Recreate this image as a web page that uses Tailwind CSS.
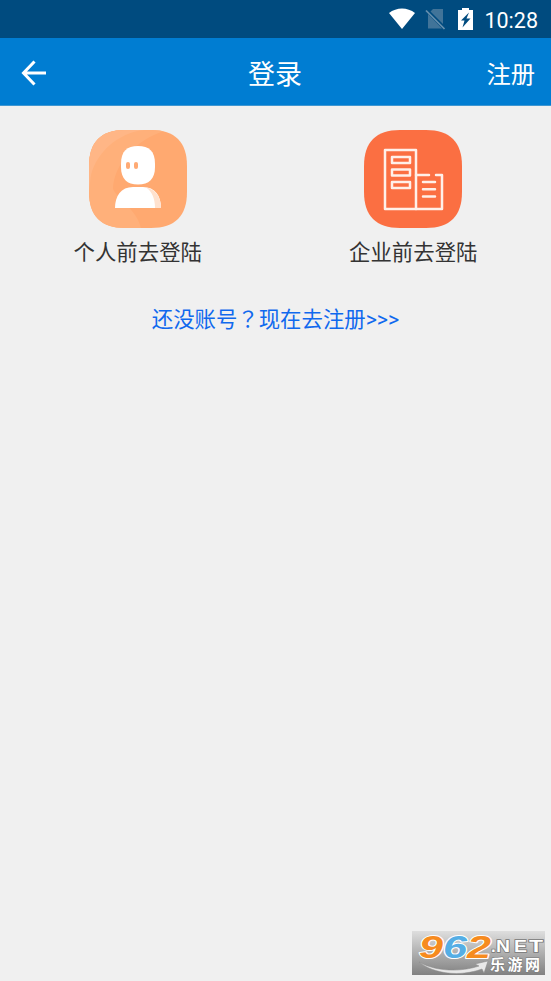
<!DOCTYPE html>
<html lang="zh-CN">
<head>
  <meta charset="UTF-8">
  <meta name="viewport" content="width=device-width, initial-scale=1.0">
  <title>登录</title>
  <script src="https://cdn.jsdelivr.net/npm/@tailwindcss/browser@4"></script>
</head>
<body class="relative flex flex-col h-[981px] overflow-hidden bg-[#f0f0f0] font-['Noto_Sans_CJK_SC',sans-serif]">
  <!-- Status bar -->
  <div class="flex items-center justify-end h-[38px] shrink-0 bg-[#004b7f] pr-[13px] text-white">
    <svg class="w-[28px] h-[22px] mr-[9px]" viewBox="0 0 28 22" fill="#fff">
      <path d="M1 5C8.500 -1 19.500 -1 27 5L14 21Z"/>
    </svg>
    <svg class="w-[21px] h-[22px] mr-[12px]" viewBox="0 0 21 22">
      <path d="M8 1H18V16L5.500 3.500ZM3 6L17 20.500H3Z" fill="#417499"/>
      <path d="M1 2.500L19.500 21" stroke="#6690ae" stroke-width="1.700"/>
    </svg>
    <svg class="w-[15px] h-[22px] mr-[11px]" viewBox="0 0 15 22">
      <path d="M4 0H11V2H15V22H0V2H4Z" fill="#fff"/>
      <path d="M11 4.500L3 12.500H6.500L4.500 19.500L12.500 10.500H8.500Z" fill="#004b7f"/>
    </svg>
    <span class="font-[Roboto,sans-serif] text-[21.500px] leading-6 pt-[3px]">10:28</span>
  </div>

  <!-- Header -->
  <header class="grid grid-cols-[1fr_auto_1fr] items-center h-[68px] shrink-0 bg-[#007dd2] border-b border-[#3f97d2] pl-[21px] pr-4 pt-[3px] text-white">
    <svg class="w-[26px] h-[26px]" viewBox="0 0 26 26" fill="none" stroke="#fff" stroke-width="3">
      <path d="M13.500 1.500L2.500 13L13.500 24.500M2.500 13H25"/>
    </svg>
    <h1 class="-ml-1.5 text-[27px] leading-10">登录</h1>
    <a href="#" class="justify-self-end text-[24.300px] leading-10">注册</a>
  </header>

  <!-- Login options -->
  <main>
    <div class="grid grid-cols-2 pt-6">
      <a href="#" class="flex flex-col items-center">
        <svg class="w-[98px] h-[98px]" viewBox="0 0 98 98">
          <defs>
            <clipPath id="tile">
              <path d="M36 0H62C86 0 98 12 98 36V62C98 86 86 98 62 98H36C12 98 0 86 0 62V36C0 12 12 0 36 0Z"/>
            </clipPath>
          </defs>
          <g clip-path="url(#tile)">
            <path d="M0 0H98V98H0Z" fill="#ffa970"/>
            <path d="M0 0H78C45 10 25 35 24 59C31 72 48 80 52 98H0Z" fill="#ffb07a"/>
            <path d="M0 0H55C29 3 8 22 2 45L0 60Z" fill="#ffb686"/>
          </g>
          <path d="M32 34C32 21 38 16 49 16C60 16 66 21 66 34V37C66 49 60 54.500 49 54.500C38 54.500 32 49 32 37Z" fill="#fff"/>
          <path d="M26 78C26 66 32 57 44 57H54C66 57 72 66 72 78Z" fill="#fff"/>
          <path d="M57 57.500C67 59 72 68 72 78H66C66 69 63 61 57 57.500Z" fill="#ffe2cf"/>
          <rect x="37" y="32" width="4" height="7" rx="2" fill="#ffaa74"/>
          <rect x="45" y="32" width="4" height="7" rx="2" fill="#ffaa74"/>
        </svg>
        <span class="mt-[6.500px] text-[21.400px] leading-8 text-[#333]">个人前去登陆</span>
      </a>
      <a href="#" class="flex flex-col items-center">
        <svg class="w-[98px] h-[98px]" viewBox="0 0 98 98">
          <path d="M36 0H62C86 0 98 12 98 36V62C98 86 86 98 62 98H36C12 98 0 86 0 62V36C0 12 12 0 36 0Z" fill="#fb6f42"/>
          <g fill="none" stroke="#fff0e9" stroke-width="2.500" stroke-linejoin="round">
            <path d="M21 20H52V79H21Z"/>
            <path d="M28 27H46V33H28ZM28 39.500H46V45.500H28ZM28 52H46V58H28Z"/>
            <path d="M52 45H65M72 45H78V79H52M59 52H71M59 59.300H71M59 66.500H71" stroke-linecap="round"/>
          </g>
        </svg>
        <span class="mt-[6.500px] text-[21.400px] leading-8 text-[#333]">企业前去登陆</span>
      </a>
    </div>
    <a href="#" class="block mt-[35.500px] text-center text-[21.400px] leading-8 text-[#1069ee]">还没账号<span lang="zh-TW" class="font-['Noto_Sans_CJK_TC',sans-serif]">？</span>现在去注册<span class="font-[Roboto,sans-serif]">&gt;&gt;&gt;</span></a>
  </main>

  <!-- Watermark over the page corner -->
  <div class="absolute left-[412px] top-[931px] w-[133px] h-[44px]">
    <svg class="w-full h-full overflow-visible" viewBox="0 0 133 44">
      <defs>
        <linearGradient id="mark" x1="0" y1="0" x2="0" y2="1">
          <stop offset="0" stop-color="#dedede"/>
          <stop offset="1" stop-color="#818181"/>
        </linearGradient>
      </defs>
      <rect width="133" height="44" fill="url(#mark)"/>
      <g font-family="Liberation Sans, sans-serif" font-weight="bold" font-style="italic" font-size="32" stroke="#fff" stroke-width="2" paint-order="stroke" stroke-linejoin="round">
        <text x="7" y="27" fill="#f68b1f" textLength="24" lengthAdjust="spacingAndGlyphs">9</text>
        <text x="31" y="27" fill="#55aee5" textLength="24" lengthAdjust="spacingAndGlyphs">6</text>
        <text x="55" y="27" fill="#f68b1f" textLength="24" lengthAdjust="spacingAndGlyphs">2</text>
      </g>
      <path d="M7 31C25 41 49 41 67 35L63 33L76 30L72 42L70 38C48 46 22 43 7 31Z" fill="#e8e8e8" stroke="#888" stroke-width=".5"/>
      <g font-family="Liberation Sans, sans-serif" font-weight="bold" font-size="17" fill="#fff" stroke="#777" stroke-width="1.500" paint-order="stroke">
        <text x="79" y="21">.</text>
        <text x="84" y="21" textLength="14" lengthAdjust="spacingAndGlyphs">N</text>
        <text x="102" y="21" textLength="13" lengthAdjust="spacingAndGlyphs">E</text>
        <text x="117" y="21" textLength="14" lengthAdjust="spacingAndGlyphs">T</text>
      </g>
      <text x="78" y="39" font-family="Noto Sans CJK SC, sans-serif" font-weight="bold" font-size="15" fill="#fff" stroke="#777" stroke-width="1" paint-order="stroke" textLength="50">乐游网</text>
    </svg>
  </div>
</body>
</html>
